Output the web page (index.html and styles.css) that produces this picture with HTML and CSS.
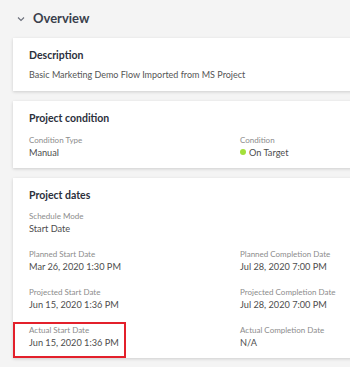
FILE: index.html
```
<!DOCTYPE html>
<html lang="en">
<head>
  <meta charset="UTF-8">
  <meta name="viewport" content="width=device-width, initial-scale=1">
  <title>Overview</title>
  <link rel="stylesheet" href="styles.css">
</head>
<body>
  <div class="overview">
    <div class="section-title">
      <svg class="chevron" width="8" height="6" viewBox="0 0 8 6">
        <polyline points="1,1.5 4,4.5 7,1.5" fill="none" stroke="#6b6f7a" stroke-width="1.1"/>
      </svg>
      <h1>Overview</h1>
    </div>

    <div class="card">
      <h2>Description</h2>
      <p class="text">Basic Marketing Demo Flow Imported from MS Project</p>
    </div>

    <div class="card">
      <h2>Project condition</h2>
      <div class="fields">
        <div class="field">
          <div class="label">Condition Type</div>
          <div class="value">Manual</div>
        </div>
        <div class="field">
          <div class="label">Condition</div>
          <div class="value"><span class="dot"></span>On Target</div>
        </div>
      </div>
    </div>

    <div class="card">
      <h2>Project dates</h2>
      <div class="fields">
        <div class="field">
          <div class="label">Schedule Mode</div>
          <div class="value">Start Date</div>
        </div>
        <div class="field"></div>
        <div class="field">
          <div class="label">Planned Start Date</div>
          <div class="value">Mar 26, 2020 1:30 PM</div>
        </div>
        <div class="field">
          <div class="label">Planned Completion Date</div>
          <div class="value">Jul 28, 2020 7:00 PM</div>
        </div>
        <div class="field">
          <div class="label">Projected Start Date</div>
          <div class="value">Jun 15, 2020 1:36 PM</div>
        </div>
        <div class="field">
          <div class="label">Projected Completion Date</div>
          <div class="value">Jul 28, 2020 7:00 PM</div>
        </div>
        <div class="field highlight">
          <div class="label">Actual Start Date</div>
          <div class="value">Jun 15, 2020 1:36 PM</div>
        </div>
        <div class="field">
          <div class="label">Actual Completion Date</div>
          <div class="value">N/A</div>
        </div>
      </div>
    </div>
  </div>
</body>
</html>
```

FILE: styles.css
```
* {
  margin: 0;
  padding: 0;
  box-sizing: border-box;
  font-family: Lato, 'Liberation Sans', sans-serif;
}

body {
  background: #f4f4f4;
  overflow: hidden;
  width: 350px;
  height: 367px;
}

.overview {
  width: 380px;
  padding: 8px 0 0 13px;
  display: flex;
  flex-direction: column;
  gap: 10px;
}

.section-title {
  display: flex;
  align-items: center;
  height: 20px;
}

.chevron {
  margin: 1px 0 0 4px;
}

.section-title h1 {
  font-size: 13px;
  font-weight: 700;
  color: #3a3f4c;
  margin-left: 8px;
}

.card {
  background: #fff;
  box-shadow: 0 1px 3px rgba(0, 0, 0, 0.16);
  padding: 10px 16px 9px;
}

.card h2 {
  font-size: 10.5px;
  font-weight: 700;
  color: #2b303b;
  line-height: 15px;
}

.text {
  font-size: 9px;
  line-height: 14px;
  color: #555;
  margin-top: 5px;
}

.fields {
  display: grid;
  grid-template-columns: 211px 1fr;
  row-gap: 14px;
  margin-top: 8.5px;
}

.label {
  font-size: 8px;
  line-height: 11px;
  color: #8c8c8c;
}

.value {
  font-size: 9.2px;
  line-height: 13px;
  color: #4d4d4d;
  display: flex;
  align-items: center;
}

.dot {
  width: 6px;
  height: 6px;
  border-radius: 50%;
  background: #a3e03a;
  margin-right: 3px;
}

.highlight {
  position: relative;
}

.highlight::after {
  content: "";
  position: absolute;
  left: -16px;
  top: -3.5px;
  width: 109px;
  height: 32px;
  border: 2px solid #e3202b;
}
```
